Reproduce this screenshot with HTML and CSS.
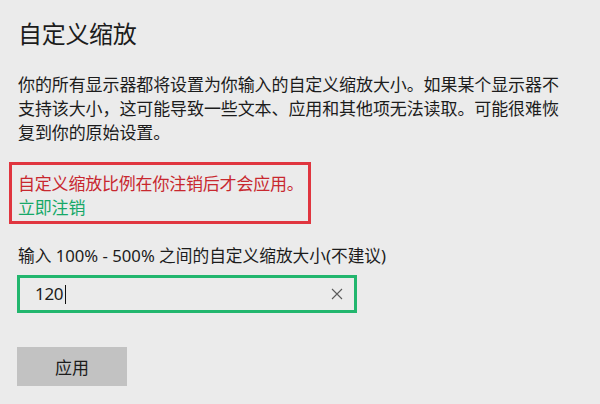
FILE: index.html
```html
<!DOCTYPE html>
<html lang="zh-CN">
<head>
<meta charset="utf-8">
<title>自定义缩放</title>
<link rel="stylesheet" href="styles.css">
</head>
<body>
<main class="page">
  <h1 class="title">自定义缩放</h1>
  <p class="desc">你的所有显示器都将设置为你输入的自定义缩放大小。如果某个显示器不支持该大小，这可能导致一些文本、应用和其他项无法读取。可能很难恢复到你的原始设置。</p>
  <div class="notice">
    <div class="notice-text">自定义缩放比例在你注销后才会应用。</div>
    <a class="notice-link" href="#">立即注销</a>
  </div>
  <label class="field-label" for="scale">输入 100% - 500% 之间的自定义缩放大小(不建议)</label>
  <div class="field">
    <span class="field-value">120</span><span class="caret"></span>
    <svg class="clear" width="12" height="12" viewBox="0 0 12 12" aria-hidden="true">
      <path d="M1 1 L11 11 M11 1 L1 11" stroke="#5a5a5a" stroke-width="1.1" fill="none"/>
    </svg>
  </div>
  <button class="apply" type="button">应用</button>
</main>
</body>
</html>
```

FILE: styles.css
```css
html, body {
  margin: 0;
  padding: 0;
  background: #ebebeb;
}
body {
  width: 600px;
  height: 404px;
  overflow: hidden;
  font-family: "Noto Sans", "Noto Sans CJK SC", sans-serif;
  color: #1c1c1c;
}
.page {
  padding: 18px 0 0 18px;
}
.title {
  margin: 0;
  font-size: 24px;
  font-weight: 400;
  line-height: 32px;
  letter-spacing: -0.3px;
}
.desc {
  margin: 23px 0 0 0;
  width: 548px;
  font-size: 17px;
  line-height: 24px;
  letter-spacing: -0.1px;
}
.notice {
  margin: 17px 0 0 -9px;
  width: fit-content;
  border: 3px solid #e0353f;
  padding: 7px 4px 1px 6px;
  font-size: 17px;
  line-height: 24px;
  letter-spacing: -0.2px;
}
.notice-text {
  color: #c8282f;
  white-space: nowrap;
}
.notice-link {
  display: block;
  color: #16a868;
  text-decoration: none;
}
.field-label {
  display: block;
  margin-top: 20px;
  font-size: 16.7px;
  line-height: 24px;
  white-space: nowrap;
}
.field {
  margin: 7px 0 0 -1px;
  height: 32px;
  border: 3px solid #22b66e;
  display: flex;
  align-items: center;
  padding: 0 0 0 15px;
  box-sizing: content-box;
  width: 319px;
}
.field-value {
  font-size: 17px;
  line-height: 24px;
  letter-spacing: -0.3px;
}
.caret {
  width: 1px;
  height: 19px;
  background: #111;
  margin-left: 2px;
}
.clear {
  margin-left: auto;
  margin-right: 11px;
}
.apply {
  display: block;
  margin: 34px 0 0 -1px;
  width: 110px;
  height: 39px;
  border: none;
  background: #c2c2c2;
  font-family: "Noto Sans", "Noto Sans CJK SC", sans-serif;
  font-size: 17px;
  color: #1c1c1c;
  padding: 0;
}
```
